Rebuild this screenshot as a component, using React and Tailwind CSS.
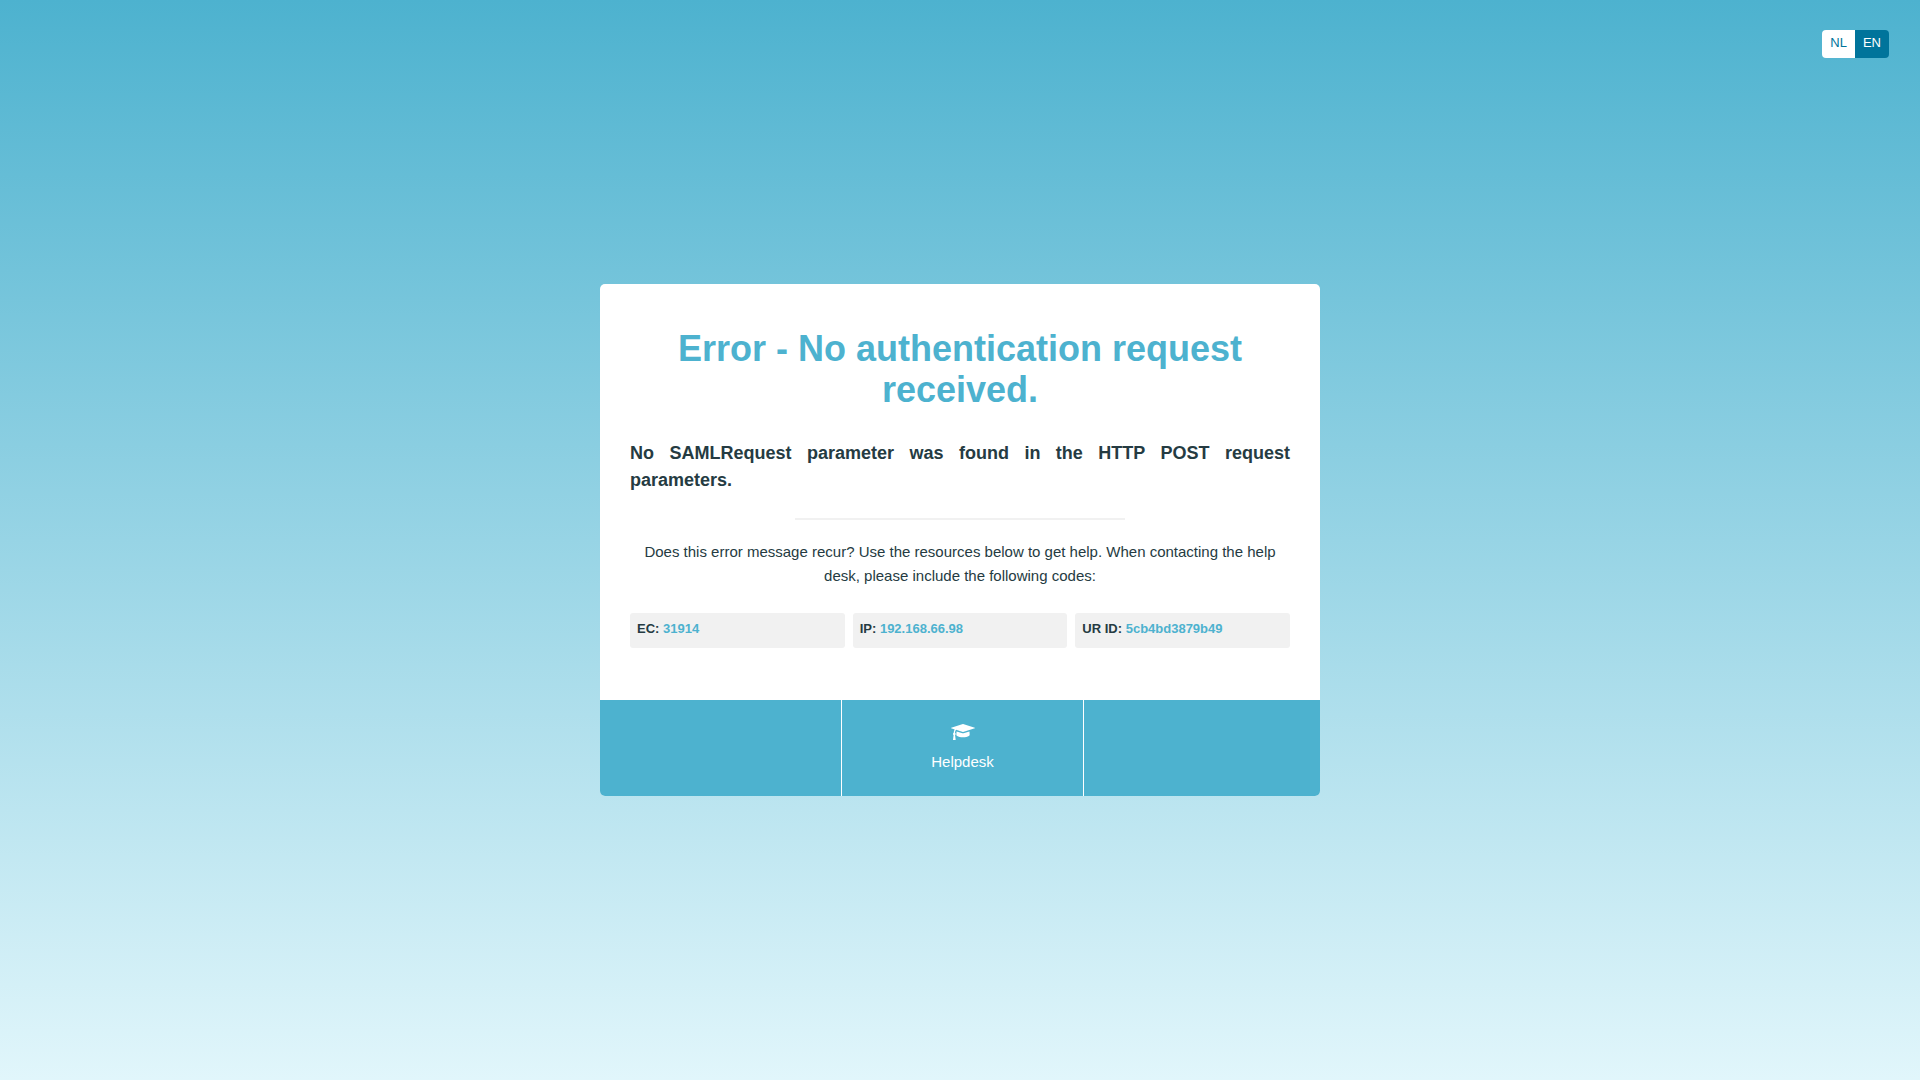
const codes = [
  { label: "EC:", value: "31914" },
  { label: "IP:", value: "192.168.66.98" },
  { label: "UR ID:", value: "5cb4bd3879b49" },
];

function LanguageSwitch() {
  return (
    <nav aria-label="Language" className="flex overflow-hidden rounded text-[13px] leading-5">
      <a href="#nl" lang="nl" className="bg-white px-2 pt-[3px] pb-[5px] text-[#00749b]">
        NL
      </a>
      <a href="#en" lang="en" aria-current="true" className="bg-[#00749b] px-2 pt-[3px] pb-[5px] text-white">
        EN
      </a>
    </nav>
  );
}

function GraduationCap() {
  return (
    <svg viewBox="0 128 2304 1536" fill="currentColor" aria-hidden="true" className="h-4 w-6">
      <path d="M1774 836l18 316q4 69-82 128t-235 93.5-323 34.5-323-34.5-235-93.5-82-128l18-316 574 181q22 7 48 7t48-7zM2304 512q0 23-22 31l-1120 352q-4 1-10 1t-10-1l-652-206q-43 34-71 111.5t-34 178.5q63 36 63 109 0 69-58 107l58 433q2 14-8 25-9 11-24 11h-192q-15 0-24-11-10-11-8-25l58-433q-58-38-58-107 0-73 65-111 11-207 98-330l-333-104q-22-8-22-31t22-31l1120-352q4-1 10-1t10 1l1120 352q22 8 22 31z" />
    </svg>
  );
}

export default function App() {
  return (
    <div
      className="grid min-h-screen grid-rows-[1fr_auto_1fr] bg-linear-to-b/srgb from-[#4db2cf] to-[#e1f6fb] text-[#253b42]"
      style={{ fontFamily: 'Helvetica, "Liberation Sans", sans-serif' }}
    >
      <header className="flex items-start justify-end px-[31px] pt-[30px]">
        <LanguageSwitch />
      </header>
      <main className="mx-auto w-full max-w-[720px] overflow-hidden rounded-[5px] bg-white">
        <div className="px-[30px] pt-11 pb-[52px]">
          <h1 className="text-center text-[36px] leading-[41px] font-bold text-[#4db2cf]">
            Error - No authentication request received.
          </h1>
          <h2 className="mt-[30px] text-justify text-lg leading-[27px] font-bold">
            No SAMLRequest parameter was found in the HTTP POST request parameters.
          </h2>
          <hr className="mx-auto mt-6 w-1/2 border-t-2 border-[#f1f1f1]" />
          <p className="mt-5 text-center text-[15px] leading-6">
            Does this error message recur? Use the resources below to get help. When contacting the help desk, please
            include the following codes:
          </p>
          <ul className="mt-[25px] grid grid-cols-3 gap-2">
            {codes.map((code) => (
              <li key={code.label} className="rounded-[3px] bg-[#f1f1f1] px-[7px] pt-1.5 pb-[9px] text-[13px] leading-5 font-bold">
                {code.label} <span className="text-[#4db2cf]">{code.value}</span>
              </li>
            ))}
          </ul>
        </div>
        <footer className="grid h-24 grid-cols-[242fr_242fr_236fr] bg-[#4db2cf] text-white">
          <div className="border-r border-white" />
          <a href="#helpdesk" className="flex flex-col items-center border-r border-white pt-6 text-[15px] leading-6">
            <GraduationCap />
            <span className="mt-2.5">Helpdesk</span>
          </a>
          <div />
        </footer>
      </main>
    </div>
  );
}
